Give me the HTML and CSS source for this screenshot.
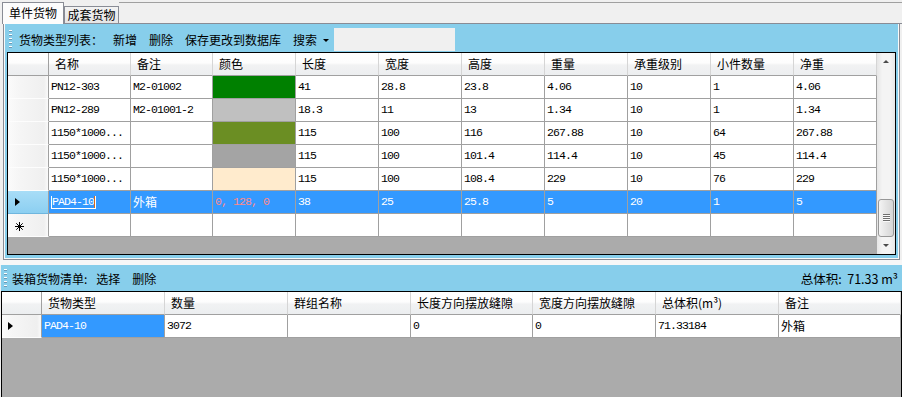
FILE: index.html
```html
<!DOCTYPE html>
<html lang="zh-CN">
<head>
    <meta charset="UTF-8">
    <meta name="viewport" content="width=device-width, initial-scale=1.0">
    <title>货物管理</title>
    <link rel="stylesheet" href="styles.css">
</head>
<body>
    <div class="tabstrip">
        <div class="tab tab-active">单件货物</div>
        <div class="tab">成套货物</div>
        <div class="tab-fill"></div>
    </div>

    <div class="tabpage">
        <div class="panel">
            <div class="toolbar">
                <span class="grip"></span>
                <span class="tb-label">货物类型列表：</span>
                <span class="tb-btn">新增</span>
                <span class="tb-btn">删除</span>
                <span class="tb-btn">保存更改到数据库</span>
                <span class="tb-btn tb-drop">搜索<span class="caret"></span></span>
                <span class="tb-input"></span>
            </div>

            <div class="grid grid-goods">
                <div class="grid-main">
                    <div class="row head">
                        <div class="cell rowhead"></div>
                        <div class="cell">名称</div>
                        <div class="cell">备注</div>
                        <div class="cell">颜色</div>
                        <div class="cell">长度</div>
                        <div class="cell">宽度</div>
                        <div class="cell">高度</div>
                        <div class="cell">重量</div>
                        <div class="cell">承重级别</div>
                        <div class="cell">小件数量</div>
                        <div class="cell">净重</div>
                    </div>
                    <div class="row">
                        <div class="cell rowhead"></div>
                        <div class="cell">PN12-303</div>
                        <div class="cell">M2-01002</div>
                        <div class="cell swatch green"></div>
                        <div class="cell">41</div>
                        <div class="cell">28.8</div>
                        <div class="cell">23.8</div>
                        <div class="cell">4.06</div>
                        <div class="cell">10</div>
                        <div class="cell">1</div>
                        <div class="cell">4.06</div>
                    </div>
                    <div class="row">
                        <div class="cell rowhead"></div>
                        <div class="cell">PN12-289</div>
                        <div class="cell">M2-01001-2</div>
                        <div class="cell swatch silver"></div>
                        <div class="cell">18.3</div>
                        <div class="cell">11</div>
                        <div class="cell">13</div>
                        <div class="cell">1.34</div>
                        <div class="cell">10</div>
                        <div class="cell">1</div>
                        <div class="cell">1.34</div>
                    </div>
                    <div class="row">
                        <div class="cell rowhead"></div>
                        <div class="cell">1150*1000...</div>
                        <div class="cell"></div>
                        <div class="cell swatch olive"></div>
                        <div class="cell">115</div>
                        <div class="cell">100</div>
                        <div class="cell">116</div>
                        <div class="cell">267.88</div>
                        <div class="cell">10</div>
                        <div class="cell">64</div>
                        <div class="cell">267.88</div>
                    </div>
                    <div class="row">
                        <div class="cell rowhead"></div>
                        <div class="cell">1150*1000...</div>
                        <div class="cell"></div>
                        <div class="cell swatch gray"></div>
                        <div class="cell">115</div>
                        <div class="cell">100</div>
                        <div class="cell">101.4</div>
                        <div class="cell">114.4</div>
                        <div class="cell">10</div>
                        <div class="cell">45</div>
                        <div class="cell">114.4</div>
                    </div>
                    <div class="row">
                        <div class="cell rowhead"></div>
                        <div class="cell">1150*1000...</div>
                        <div class="cell"></div>
                        <div class="cell swatch almond"></div>
                        <div class="cell">115</div>
                        <div class="cell">100</div>
                        <div class="cell">108.4</div>
                        <div class="cell">229</div>
                        <div class="cell">10</div>
                        <div class="cell">76</div>
                        <div class="cell">229</div>
                    </div>
                    <div class="row selected">
                        <div class="cell rowhead current"><span class="pointer"></span></div>
                        <div class="cell"><span class="edit-box"><span class="edit-sel">PAD4-10</span><span class="edit-caret"></span></span></div>
                        <div class="cell cjk">外箱</div>
                        <div class="cell color-text">0, 128, 0</div>
                        <div class="cell">38</div>
                        <div class="cell">25</div>
                        <div class="cell">25.8</div>
                        <div class="cell">5</div>
                        <div class="cell">20</div>
                        <div class="cell">1</div>
                        <div class="cell">5</div>
                    </div>
                    <div class="row">
                        <div class="cell rowhead">
                            <svg class="newrow" width="9" height="9" viewBox="0 0 9 9">
                                <path d="M4.5 0V9M0 4.5H9M1.3 1.3L7.7 7.7M7.7 1.3L1.3 7.7" stroke="#000" stroke-width="1" fill="none"/>
                            </svg>
                        </div>
                        <div class="cell"></div>
                        <div class="cell"></div>
                        <div class="cell"></div>
                        <div class="cell"></div>
                        <div class="cell"></div>
                        <div class="cell"></div>
                        <div class="cell"></div>
                        <div class="cell"></div>
                        <div class="cell"></div>
                        <div class="cell"></div>
                    </div>
                    <div class="workspace"></div>
                </div>

                <div class="vscroll">
                    <div class="sb-btn"><span class="arrow-up"></span></div>
                    <div class="sb-track"></div>
                    <div class="sb-thumb"><span></span><span></span><span></span><span></span></div>
                    <div class="sb-btn"><span class="arrow-down"></span></div>
                </div>
            </div>
        </div>
    </div>

    <div class="splitter"></div>

    <div class="pack">
        <div class="toolbar toolbar-pack">
            <span class="grip"></span>
            <span class="tb-label">装箱货物清单:</span>
            <span class="tb-btn">选择</span>
            <span class="tb-btn">删除</span>
            <span class="tb-total">总体积:&nbsp; 71.33 m³</span>
        </div>

        <div class="grid grid-pack">
            <div class="grid-main">
                <div class="row head">
                    <div class="cell rowhead"></div>
                    <div class="cell">货物类型</div>
                    <div class="cell">数量</div>
                    <div class="cell">群组名称</div>
                    <div class="cell">长度方向摆放缝隙</div>
                    <div class="cell">宽度方向摆放缝隙</div>
                    <div class="cell">总体积(m³)</div>
                    <div class="cell">备注</div>
                </div>
                <div class="row">
                    <div class="cell rowhead"><span class="pointer"></span></div>
                    <div class="cell picked">PAD4-10</div>
                    <div class="cell">3072</div>
                    <div class="cell"></div>
                    <div class="cell">0</div>
                    <div class="cell">0</div>
                    <div class="cell">71.33184</div>
                    <div class="cell cjk">外箱</div>
                </div>
                <div class="workspace"></div>
            </div>
        </div>
    </div>
</body>
</html>
```

FILE: styles.css
```css
* {
    box-sizing: border-box;
}

body {
    margin: 0;
    width: 902px;
    height: 397px;
    overflow: hidden;
    background: #f0f0f0;
    font-family: "Noto Sans CJK SC", sans-serif;
    font-size: 12px;
    color: #000;
}

/* tabs */

.tabstrip {
    display: flex;
    align-items: flex-end;
    height: 24px;
    padding-left: 2px;
}

.tab {
    width: 55px;
    height: 18px;
    border: 1px solid #898c95;
    background: linear-gradient(#f3f3f3, #e5e5e5);
    text-align: center;
    line-height: 16px;
}

.tab-active {
    width: 62px;
    height: 22px;
    border-bottom: none;
    background: #fcfcfc;
    line-height: 20px;
}

.tab-fill {
    flex: 1;
    height: 22px;
    border-top: 1px solid #a0a0a0;
    border-bottom: 1px solid #898c95;
}

.tabpage {
    margin: 0 2px 0 3px;
    height: 236px;
    padding: 0 1px 1px 1px;
    border: 1px solid #898c95;
    border-top: none;
    background: #f9f9f9;
}

.panel {
    height: 234px;
    background: #87ceeb;
}

/* toolbars */

.toolbar {
    display: flex;
    align-items: center;
    height: 28px;
    padding: 2px 0 0 4px;
}

.grip {
    width: 3px;
    height: 18px;
    margin-right: 7px;
    background: repeating-linear-gradient(to bottom, #fff 0, #fff 1px, #6d9ab5 1px, #6d9ab5 2px, transparent 2px, transparent 4px);
}

.tb-label {
    margin-right: 4px;
}

.tb-btn {
    padding: 0 6px;
}

.tb-drop {
    display: flex;
    align-items: center;
    padding-right: 5px;
}

.caret {
    width: 0;
    height: 0;
    margin-left: 6px;
    margin-top: 2px;
    border-left: 3px solid transparent;
    border-right: 3px solid transparent;
    border-top: 3px solid #000;
}

.tb-input {
    width: 121px;
    height: 23px;
    background: #f0f0f0;
}

.toolbar-pack {
    height: 26px;
    padding: 0 4px 0 3px;
}

.toolbar-pack .grip {
    margin-right: 5px;
}

.toolbar-pack .tb-label {
    margin-right: 3px;
}

.tb-total {
    margin-left: auto;
    font-size: 12.5px;
}

/* data grids */

.grid {
    display: flex;
    border: 1px solid #000;
    background: #ababab;
}

.grid-goods {
    width: 889px;
    height: 203px;
    margin-left: 2px;
}

.grid-main {
    display: flex;
    flex-direction: column;
}

.grid-goods .grid-main {
    width: 869px;
}

.grid-pack .grid-main {
    width: 899px;
}

.row {
    display: grid;
    height: 23px;
}

.grid-goods .row {
    grid-template-columns: 41px 82px 82px repeat(8, 83px);
}

.grid-pack .row {
    grid-template-columns: 40px 123px 123px 123px 122px 123px 123px 122px;
}

.cell {
    height: 23px;
    padding-left: 2px;
    border-right: 1px solid #a0a0a0;
    border-bottom: 1px solid #a0a0a0;
    background: #fff;
    font-family: "Liberation Mono", "Noto Sans CJK SC", monospace;
    font-size: 11.5px;
    letter-spacing: -0.9px;
    line-height: 22px;
    white-space: nowrap;
    overflow: hidden;
}

.cell.cjk {
    font-family: "Noto Sans CJK SC", sans-serif;
    font-size: 12px;
    letter-spacing: 0;
}

.head .cell {
    padding-left: 6px;
    border-right-color: #d5d5d5;
    background: linear-gradient(#ffffff 0%, #fdfdfd 45%, #f1f2f3 55%, #eceef0 100%);
    font-family: "Noto Sans CJK SC", sans-serif;
    font-size: 12px;
    letter-spacing: 0;
}

.cell.rowhead,
.head .cell.rowhead {
    display: flex;
    align-items: center;
    padding-left: 7px;
    border-right-color: #a0a0a0;
    border-bottom-color: #fdfdfd;
    background: linear-gradient(to right, #fbfbfb 0%, #f6f6f6 25%, #efefef 90%, #fafafa 100%);
}

.head .cell.rowhead {
    border-bottom-color: #a0a0a0;
    background: linear-gradient(#ffffff 0%, #fdfdfd 45%, #f1f2f3 55%, #eceef0 100%);
}

.grid-pack .cell.rowhead {
    padding-left: 6px;
}

.rowhead.current {
    background: linear-gradient(#a8ddf7, #8ccff1);
    border-bottom-color: #6fb6de;
}

.pointer {
    width: 0;
    height: 0;
    border-top: 4px solid transparent;
    border-bottom: 4px solid transparent;
    border-left: 5px solid #000;
}

.newrow {
    margin-top: 3px;
}

.swatch {
    border-right-color: #a0a0a0;
}

.green { background: #008000; }
.silver { background: #c0c0c0; }
.olive { background: #6b8e23; }
.gray { background: #a4a4a4; }
.almond { background: #ffebcd; }

.selected .cell {
    background: #3399ff;
    color: #fff;
}

.selected .cell.rowhead {
    background: linear-gradient(#a8ddf7, #8ccff1);
}

.selected .color-text {
    color: #ff8a8a;
}

.edit-box {
    display: inline-flex;
    align-items: center;
    height: 13px;
    padding: 0 1px;
    background: #fff;
    line-height: 12px;
}

.edit-sel {
    background: #3399ff;
    color: #fff;
}

.edit-caret {
    width: 1px;
    height: 12px;
    background: #d2691e;
}

.cell.picked {
    background: #3399ff;
    color: #fff;
}

.workspace {
    flex: 1;
    background: #ababab;
}

/* vertical scrollbar */

.vscroll {
    display: flex;
    flex-direction: column;
    width: 18px;
    background: linear-gradient(to right, #e6e6e6 0%, #f4f4f4 30%, #f4f4f4 70%, #e6e6e6 100%);
}

.sb-btn {
    display: flex;
    align-items: center;
    justify-content: center;
    height: 17px;
}

.arrow-up {
    width: 0;
    height: 0;
    border-left: 3px solid transparent;
    border-right: 3px solid transparent;
    border-bottom: 3px solid #4a4a4a;
}

.arrow-down {
    width: 0;
    height: 0;
    border-left: 3px solid transparent;
    border-right: 3px solid transparent;
    border-top: 3px solid #4a4a4a;
}

.sb-track {
    flex: 1;
}

.sb-thumb {
    display: flex;
    flex-direction: column;
    align-items: center;
    justify-content: center;
    height: 38px;
    margin: 0 1px;
    border: 1px solid #979797;
    border-radius: 3px;
    background: linear-gradient(to right, #f4f4f4, #e4e4e4 50%, #d6d6d6);
}

.sb-thumb span {
    width: 7px;
    height: 1px;
    margin: 0 0 1px;
    background: #6e6e6e;
    box-shadow: 0 1px 0 #fafafa;
}

/* lower section */

.splitter {
    height: 5px;
    background: #f7f7f7;
}

.pack {
    margin-left: 1px;
    height: 132px;
}

.pack .toolbar {
    background: #87ceeb;
}

.grid-pack {
    height: 106px;
    border-bottom: none;
}
```
